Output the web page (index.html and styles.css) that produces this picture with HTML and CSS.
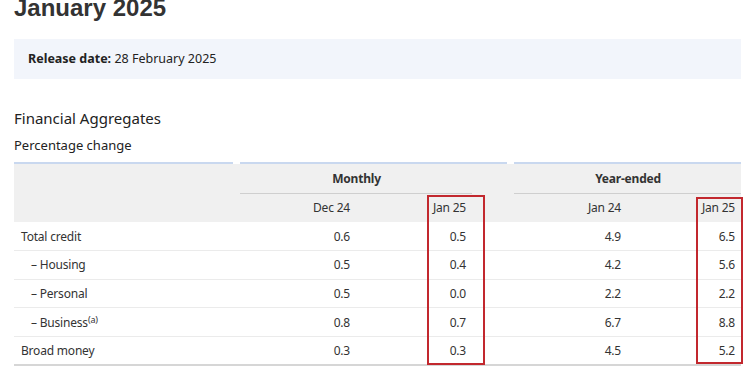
FILE: index.html
```html
<!DOCTYPE html>
<html lang="en">
<head>
<meta charset="utf-8">
<title>January 2025</title>
<link rel="stylesheet" href="styles.css">
</head>
<body>
<main class="page">
  <h1 class="title">January 2025</h1>
  <div class="release"><strong>Release date:</strong> 28 February 2025</div>
  <h2 class="section">Financial Aggregates</h2>
  <p class="caption">Percentage change</p>
  <div class="table-wrap">
    <table class="agg">
      <colgroup>
        <col class="c-label"><col class="c-num"><col class="c-num"><col class="c-spacer"><col class="c-num2"><col class="c-num3">
      </colgroup>
      <thead>
        <tr class="h1row">
          <th class="gap7"></th>
          <th colspan="2" class="grp">Monthly</th>
          <th class="gap7"></th>
          <th colspan="2" class="grp">Year-ended</th>
        </tr>
        <tr class="h2row">
          <th></th>
          <th class="num ul">Dec 24</th>
          <th class="num ul">Jan 25</th>
          <th></th>
          <th class="num ul">Jan 24</th>
          <th class="num ul">Jan 25</th>
        </tr>
      </thead>
      <tbody>
        <tr><td class="lbl">Total credit</td><td class="num">0.6</td><td class="num">0.5</td><td></td><td class="num">4.9</td><td class="num">6.5</td></tr>
        <tr><td class="lbl sub">– Housing</td><td class="num">0.5</td><td class="num">0.4</td><td></td><td class="num">4.2</td><td class="num">5.6</td></tr>
        <tr><td class="lbl sub">– Personal</td><td class="num">0.5</td><td class="num">0.0</td><td></td><td class="num">2.2</td><td class="num">2.2</td></tr>
        <tr><td class="lbl sub">– Business<sup>(a)</sup></td><td class="num">0.8</td><td class="num">0.7</td><td></td><td class="num">6.7</td><td class="num">8.8</td></tr>
        <tr class="last"><td class="lbl">Broad money</td><td class="num">0.3</td><td class="num">0.3</td><td></td><td class="num">4.5</td><td class="num">5.2</td></tr>
      </tbody>
    </table>
    <div class="hl hl-monthly"></div>
    <div class="hl hl-year"></div>
  </div>
</main>
</body>
</html>
```
FILE: styles.css
```css
html, body {
  margin: 0;
  padding: 0;
  background: #ffffff;
}
body {
  font-family: "Noto Sans", "DejaVu Sans", sans-serif;
  color: #333333;
  overflow: hidden;
}
.page {
  padding: 0 9px 0 14px;
}
.title {
  font-family: "Liberation Sans", Arial, sans-serif;
  font-weight: bold;
  font-size: 24px;
  line-height: 28px;
  margin: -6px 0 0 0;
  color: #333333;
}
.release {
  margin-top: 17px;
  height: 40px;
  box-sizing: border-box;
  padding: 11px 14px 0 14px;
  background: #f2f5fb;
  font-size: 12.5px;
  line-height: 18px;
  color: #222222;
}
.release strong {
  font-weight: bold;
}
.section {
  font-weight: normal;
  font-size: 15px;
  line-height: 20px;
  margin: 29px 0 0 0;
  color: #222222;
}
.caption {
  font-size: 13px;
  line-height: 18px;
  margin: 8px 0 0 0;
  color: #222222;
}
.table-wrap {
  position: relative;
  margin-top: 8px;
  width: 727px;
}
.agg {
  width: 727px;
  table-layout: fixed;
  border-collapse: collapse;
  font-size: 12px;
  letter-spacing: -0.2px;
  color: #333333;
}
.c-label { width: 226px; }
.c-num { width: 116px; }
.c-spacer { width: 42px; }
.c-num2 { width: 113px; }
.c-num3 { width: 114px; }
.agg th, .agg td {
  padding: 0 6px 0 7px;
  white-space: nowrap;
}
.h1row th {
  height: 31px;
  box-sizing: border-box;
  padding-top: 2px;
  font-weight: bold;
  text-align: center;
  vertical-align: middle;
  background:
    linear-gradient(#c9d8ef, #c9d8ef) 0 0 / 100% 2px no-repeat,
    linear-gradient(#f0f0f0, #f0f0f0) 0 2px / 100% 100% no-repeat;
}
.h1row th.gap7 {
  background:
    linear-gradient(#c9d8ef, #c9d8ef) 0 0 / calc(100% - 7px) 2px no-repeat,
    linear-gradient(#f0f0f0, #f0f0f0) 0 2px / 100% 100% no-repeat;
}
.h2row th {
  height: 29px;
  box-sizing: border-box;
  background: #f0f0f0;
  font-weight: normal;
  vertical-align: middle;
}
.h2row th.ul {
  border-top: 1px solid #cfcfcf;
}
.num {
  text-align: right;
}
.agg tbody td {
  height: 28.6px;
  box-sizing: border-box;
  border-bottom: 1px solid #ebebeb;
  vertical-align: middle;
}
.agg tbody tr.last td {
  border-bottom: 2px solid #d6d6d6;
}
.lbl {
  text-align: left;
}
.lbl.sub {
  padding-left: 17px;
}
.lbl sup {
  font-size: 9px;
  line-height: 0;
  vertical-align: 4px;
}
.hl {
  position: absolute;
  border: 2px solid #c2282e;
  box-sizing: border-box;
}
.hl-monthly {
  left: 413px;
  top: 33px;
  width: 58px;
  height: 170px;
}
.hl-year {
  left: 682px;
  top: 35px;
  width: 47px;
  height: 167px;
}
```
